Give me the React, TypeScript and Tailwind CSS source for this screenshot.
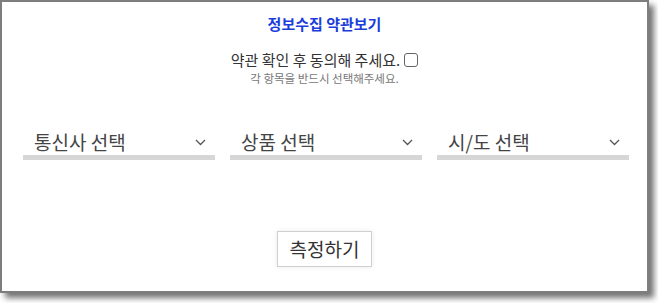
import React from "react"

const font = { fontFamily: '"Noto Sans CJK KR", "Noto Sans", sans-serif' }

function Chevron() {
  return (
    <svg width="11" height="7" viewBox="0 0 11 7" fill="none" className="shrink-0">
      <path d="M1 1l4.5 4.5L10 1" stroke="#555" strokeWidth="1.3" />
    </svg>
  )
}

function SelectBox({ label }: { label: string }) {
  return (
    <div className="w-[192px] flex flex-col">
      <div className="flex items-center justify-between pl-[11px] pr-[9px] h-[26px]">
        <span className="text-[19px] leading-[26px] text-[#444]">{label}</span>
        <Chevron />
      </div>
      <div className="h-[5px] bg-[#d6d6d6]" />
    </div>
  )
}

export default function App() {
  return (
    <div className="w-[658px] h-[303px] bg-white" style={font}>
      <div className="w-[649px] h-[293px] border-2 border-[#7d7d7d] bg-white shadow-[5px_5px_6px_rgba(0,0,0,0.55)] flex flex-col items-center pt-[12px]">
        <h1 className="text-[15px] leading-[20px] font-bold text-[#1c3ddc]">정보수집 약관보기</h1>

        <label className="mt-[16px] flex items-center gap-[4px] text-[15px] leading-[20px] text-[#333]">
          약관 확인 후 동의해 주세요.
          <span className="w-[14px] h-[14px] border border-[#666] rounded-[3px] bg-white" />
        </label>
        <p className="text-[11.5px] leading-[16px] text-[#777]">각 항목을 반드시 선택해주세요.</p>

        <div className="self-start ml-[21px] mt-[43px] flex gap-[15px]">
          <SelectBox label="통신사 선택" />
          <SelectBox label="상품 선택" />
          <SelectBox label="시/도 선택" />
        </div>

        <button className="mt-[71px] w-[95px] h-[36px] border border-[#cfcfcf] bg-white text-[19px] text-[#333] shadow-[0_0_6px_rgba(0,0,0,0.08)]">
          측정하기
        </button>
      </div>
    </div>
  )
}
